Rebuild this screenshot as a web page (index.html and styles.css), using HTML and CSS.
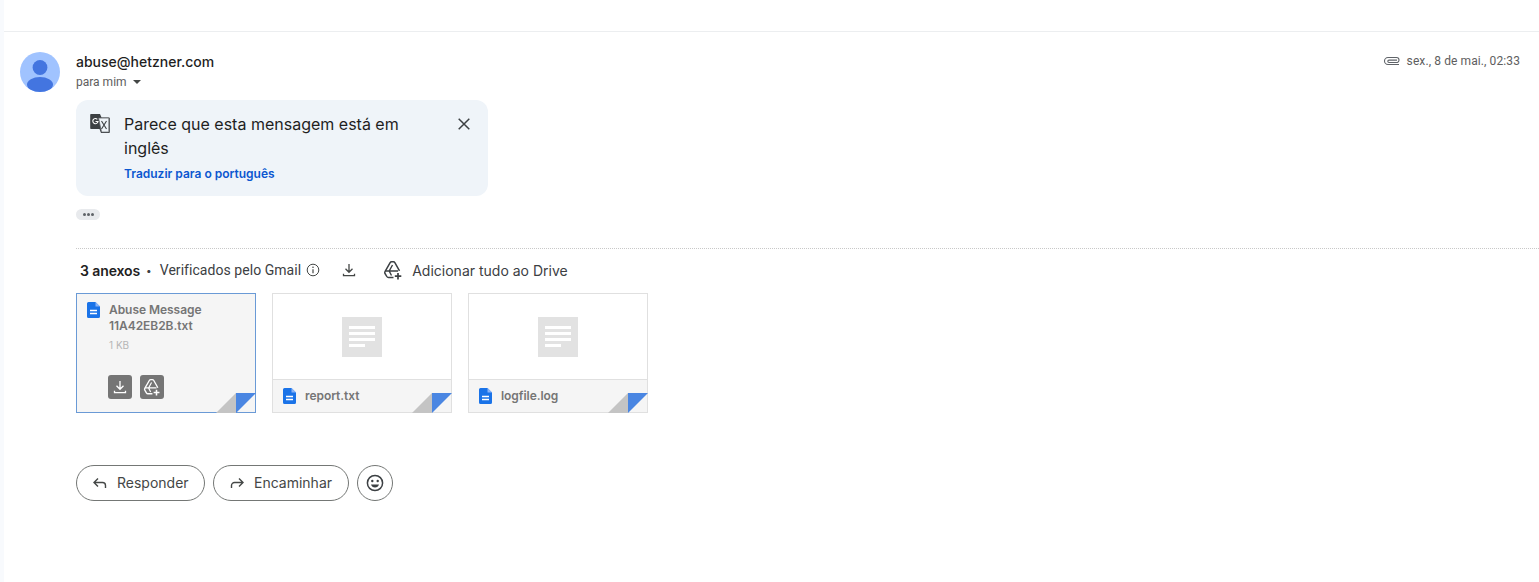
FILE: index.html
```html
<!DOCTYPE html>
<html lang="pt">
<head>
<meta charset="utf-8">
<title>abuse@hetzner.com</title>
<link rel="stylesheet" href="styles.css">
</head>
<body>
<div class="rail"></div>
<main class="main">
  <article class="message">
    <div class="avatar">
      <svg viewBox="0 0 40 40" width="40" height="40"><circle cx="20" cy="20" r="20" fill="#a0c3ff"/><circle cx="20" cy="15.500" r="7.400" fill="#4375e0"/><ellipse cx="20" cy="32.500" rx="13" ry="7.500" fill="#4375e0"/></svg>
    </div>
    <div class="content">
      <header class="head">
        <div class="who">
          <div class="sender">abuse@hetzner.com</div>
          <div class="to">para mim <span class="caret"></span></div>
        </div>
        <div class="when">
          <svg class="clip" viewBox="0 0 17 10" width="17" height="10"><path d="M16 8.500H5a3.500 3.500 0 0 1 0-7h8.500a2.500 2.500 0 0 1 0 5H6a1.200 1.200 0 0 1 0-2.400h8" fill="none" stroke="#5f6368" stroke-width="1.100"/></svg>
          <span>sex., 8 de mai., 02:33</span>
        </div>
      </header>
      <section class="banner">
        <svg class="gt" viewBox="0 0 20 20" width="20" height="20"><path d="M1 0h9l1.500 3.500H19a.8.8 0 0 1 .8.8V18.200a.8.8 0 0 1-.8.8H11l-1.500-4H1a.8.8 0 0 1-.8-.8V.8A.8.800 0 0 1 1 0z" fill="#3c4043"/><path d="M8.500 4H18.500a.4.4 0 0 1 .4.4V17.700a.4.4 0 0 1-.4.4H11.500z" fill="#eef3f8" stroke="#5f6368" stroke-width=".8"/><path d="M7.300 5.300a2.600 2.600 0 1 0 .7 2.200H5.500" fill="none" stroke="#fff" stroke-width="1.100"/><path d="M11.500 7l5 8M16.500 7l-5 8" stroke="#3c4043" stroke-width="1.100" fill="none"/></svg>
        <div class="banner-text">
          <p class="banner-msg">Parece que esta mensagem está em inglês</p>
          <a class="banner-link">Traduzir para o português</a>
        </div>
        <svg class="close" viewBox="0 0 12 12" width="12" height="12"><path d="M.7.700l10.600 10.600M11.300.7L.7 11.300" stroke="#3c4043" stroke-width="1.500"/></svg>
      </section>
      <div class="dots"><i></i><i></i><i></i></div>
      <section class="attachments">
        <div class="att-bar">
          <strong>3 anexos</strong>
          <span class="sep">•</span>
          <span class="verified">Verificados pelo Gmail</span>
          <svg class="info" viewBox="0 0 14 14" width="14" height="14"><circle cx="7" cy="7" r="5.800" fill="none" stroke="#444746" stroke-width="1"/><path d="M7 6.200v4" stroke="#444746" stroke-width="1.200"/><circle cx="7" cy="4.300" r=".8" fill="#444746"/></svg>
          <svg class="dl" viewBox="0 0 14 14" width="14" height="14"><path d="M7 1v8M3.500 5.800L7 9.300l3.500-3.500M1.500 10.800v1.900h11v-1.900" fill="none" stroke="#444746" stroke-width="1.300"/></svg>
          <svg class="drive" viewBox="0 0 20 20" width="20" height="20"><path d="M10.500 17.500H5.500a2 2 0 0 1-1.700-1L2 13.500a2 2 0 0 1 0-2L7 2.800a2 2 0 0 1 1.700-1h1.600a2 2 0 0 1 1.700 1l4.500 8" fill="none" stroke="#3c4043" stroke-width="1.500"/><path d="M2.500 11h12.500M9.500 5L6.200 11l2.300 4.500" fill="none" stroke="#3c4043" stroke-width="1.400"/><path d="M15 13v6.500M11.800 16.200h6.500" stroke="#3c4043" stroke-width="1.700"/></svg>
          <span class="add">Adicionar tudo ao Drive</span>
        </div>
        <div class="cards">
          <div class="card card-active">
            <div class="card-top">
              <svg class="doc" viewBox="0 0 13 16" width="13" height="16"><path d="M1.500 0H8.500L13 4.500V14.500A1.500 1.500 0 0 1 11.500 16H1.500A1.500 1.500 0 0 1 0 14.500V1.500A1.500 1.500 0 0 1 1.500 0z" fill="#1a73e8"/><path d="M8.500 0V4.500H13z" fill="#8ab4f8"/><path d="M3 8.500H10M3 11.500H10" stroke="#fff" stroke-width="1.300"/></svg>
              <div class="card-info">
                <div class="card-name">Abuse Message 11A42EB2B.txt</div>
                <div class="card-size">1 KB</div>
              </div>
            </div>
            <div class="card-actions">
              <span class="act"><svg viewBox="0 0 14 14" width="14" height="14"><path d="M7 1v8M3.500 5.800L7 9.300l3.500-3.500M1.500 10.800v1.900h11v-1.900" fill="none" stroke="#fff" stroke-width="1.300"/></svg></span>
              <span class="act"><svg viewBox="0 0 20 20" width="18" height="18"><path d="M10.500 17.500H5.500a2 2 0 0 1-1.700-1L2 13.500a2 2 0 0 1 0-2L7 2.800a2 2 0 0 1 1.700-1h1.600a2 2 0 0 1 1.700 1l4.500 8" fill="none" stroke="#fff" stroke-width="1.500"/><path d="M2.500 11h12.500M9.500 5L6.200 11l2.300 4.500" fill="none" stroke="#fff" stroke-width="1.300"/><path d="M15 13v6.500M11.800 16.200h6.500" stroke="#fff" stroke-width="1.700"/></svg></span>
            </div>
            <span class="fold"></span>
          </div>
          <div class="card">
            <div class="thumb"><span class="page"><i></i><i></i><i></i><i></i></span></div>
            <div class="foot">
              <svg class="doc" viewBox="0 0 13 16" width="13" height="16"><path d="M1.500 0H8.500L13 4.500V14.500A1.500 1.500 0 0 1 11.500 16H1.500A1.500 1.500 0 0 1 0 14.500V1.500A1.500 1.500 0 0 1 1.500 0z" fill="#1a73e8"/><path d="M8.500 0V4.500H13z" fill="#8ab4f8"/><path d="M3 8.500H10M3 11.500H10" stroke="#fff" stroke-width="1.300"/></svg>
              <span class="card-name">report.txt</span>
            </div>
            <span class="fold"></span>
          </div>
          <div class="card">
            <div class="thumb"><span class="page"><i></i><i></i><i></i><i></i></span></div>
            <div class="foot">
              <svg class="doc" viewBox="0 0 13 16" width="13" height="16"><path d="M1.500 0H8.500L13 4.500V14.500A1.500 1.500 0 0 1 11.500 16H1.500A1.500 1.500 0 0 1 0 14.500V1.500A1.500 1.500 0 0 1 1.500 0z" fill="#1a73e8"/><path d="M8.500 0V4.500H13z" fill="#8ab4f8"/><path d="M3 8.500H10M3 11.500H10" stroke="#fff" stroke-width="1.300"/></svg>
              <span class="card-name">logfile.log</span>
            </div>
            <span class="fold"></span>
          </div>
        </div>
      </section>
      <div class="replies">
        <button class="pill pill-reply"><svg viewBox="0 0 16 14" width="16" height="14"><path d="M6 2.500L2 6.500l4 4M2 6.500h8.500a3 3 0 0 1 3 3v2.500" fill="none" stroke="#444746" stroke-width="1.400"/></svg>Responder</button>
        <button class="pill pill-forward"><svg viewBox="0 0 16 14" width="16" height="14"><path d="M10 2.500l4 4-4 4M14 6.500H5.500a3 3 0 0 0-3 3v2.500" fill="none" stroke="#444746" stroke-width="1.400"/></svg>Encaminhar</button>
        <button class="pill pill-emoji"><svg viewBox="0 0 18 18" width="18" height="18"><circle cx="9" cy="9" r="7.600" fill="none" stroke="#3c4043" stroke-width="1.500"/><circle cx="6.300" cy="7" r="1.200" fill="#3c4043"/><circle cx="11.700" cy="7" r="1.200" fill="#3c4043"/><path d="M5 10.500h8a4.200 4.200 0 0 1-8 0z" fill="#3c4043"/></svg></button>
      </div>
    </div>
  </article>
</main>
</body>
</html>
```
FILE: styles.css
```css
* { box-sizing: border-box; }
html, body { margin: 0; height: 100%; overflow: hidden; }
body {
  display: flex;
  background: #fff;
  font-family: Inter, "Liberation Sans", sans-serif;
  color: #1f1f1f;
}
.rail { width: 4px; flex: none; background: #f8fafd; }
.main { flex: 1; min-width: 0; padding-top: 31px; }
.message {
  display: flex;
  gap: 16px;
  border-top: 1px solid #eceef0;
  padding: 20px 0 0 16px;
}
.avatar { width: 40px; height: 40px; flex: none; }
.avatar svg { display: block; }
.content { flex: 1; min-width: 0; }

.head { display: flex; justify-content: space-between; padding-right: 19px; height: 48px; }
.sender { font-size: 14px; font-weight: 500; line-height: 20px; color: #1f1f1f; }
.to { font-family: Roboto, sans-serif; font-size: 12px; line-height: 16px; color: #5e5e5e; margin-top: 2px; display: flex; align-items: center; gap: 5px; }
.caret { width: 0; height: 0; border: 4px solid transparent; border-top: 4px solid #444746; border-bottom: 0; margin-left: 1px; }
.when { display: flex; align-items: center; height: 18px; gap: 7px; font-family: Roboto, sans-serif; font-size: 12px; letter-spacing: .1px; color: #5e5e5e; }
.clip { display: block; }

.banner {
  width: 412px;
  height: 96px;
  background: #eff4f9;
  border-radius: 12px;
  display: flex;
  padding: 12px 18px 0 14px;
}
.gt { flex: none; margin-top: 2px; }
.banner-text { width: 314px; margin-left: 14px; }
.banner-msg { margin: 0; font-size: 16px; line-height: 24px; color: #1f1f1f; }
.banner-link { display: block; margin-top: 6px; font-size: 12px; line-height: 16px; font-weight: 600; color: #0b57d0; }
.close { flex: none; margin: 6px 0 0 20px; }

.dots {
  width: 24px;
  height: 11px;
  margin-top: 13px;
  border-radius: 6px;
  background: #e8eaed;
  display: flex;
  justify-content: center;
  align-items: center;
  gap: 1px;
}
.dots i { width: 3px; height: 3px; border-radius: 50%; background: #5f6368; }

.attachments { margin-top: 28px; border-top: 1px dotted #c8c8c8; }
.att-bar {
  display: flex;
  align-items: center;
  height: 44px;
  padding: 0 0 2px 4px;
  font-size: 14px;
  color: #3c4043;
}
.att-bar strong { font-weight: 600; letter-spacing: -.1px; color: #1f1f1f; }
.sep { margin: 0 8px 0 6px; font-size: 10px; }
.verified { font-family: Roboto, sans-serif; letter-spacing: .05px; }
.info { margin-left: 5px; }
.dl { margin-left: 22px; }
.drive { margin-left: 27px; }
.add { margin-left: 9px; }

.cards { display: flex; gap: 16px; }
.card {
  position: relative;
  width: 180px;
  height: 120px;
  border: 1px solid #e0e0e0;
  display: flex;
  flex-direction: column;
}
.card-active { border-color: #6a9ad6; background: #f5f5f5; padding: 8px 10px; justify-content: space-between; }
.card-top { display: flex; gap: 9px; }
.doc { flex: none; display: block; }
.card-info { width: 120px; }
.card-name { font-size: 12px; line-height: 16px; font-weight: 600; letter-spacing: -.05px; color: #757575; }
.card-size { font-size: 10px; line-height: 14px; color: #b5b5b5; margin-top: 4px; }
.card-actions { display: flex; gap: 8px; padding: 0 0 5px 21px; }
.act { width: 24px; height: 24px; border-radius: 3px; background: #757575; display: flex; align-items: center; justify-content: center; }
.thumb { height: 85px; display: flex; align-items: center; justify-content: center; }
.page {
  width: 40px;
  height: 40px;
  background: #e2e2e2;
  display: flex;
  flex-direction: column;
  gap: 3px;
  padding: 9px 7px;
}
.page i { display: block; height: 3px; background: #fff; flex: none; }
.page i:last-child { width: 16px; }
.foot {
  flex: 1;
  background: #f5f5f5;
  border-top: 1px solid #e0e0e0;
  display: flex;
  align-items: center;
  gap: 9px;
  padding-left: 10px;
}
.fold {
  position: absolute;
  right: -1px;
  bottom: -1px;
  width: 40px;
  height: 20px;
}
.fold::before, .fold::after {
  content: "";
  position: absolute;
  top: 0;
  width: 20px;
  height: 20px;
}
.fold::before { left: 0; background: #c4c4c4; clip-path: polygon(100% 0, 100% 100%, 0 100%); }
.fold::after { right: 0; background: #4a86e2; clip-path: polygon(0 0, 100% 0, 0 100%); }

.replies { display: flex; gap: 8px; margin-top: 52px; }
.pill {
  height: 36px;
  border: 1px solid #747775;
  border-radius: 18px;
  background: #fff;
  display: flex;
  align-items: center;
  font: 400 14px/20px Inter, "Liberation Sans", sans-serif;
  color: #444746;
  padding: 0;
}
.pill-reply { width: 129px; padding-left: 15px; gap: 9px; }
.pill-forward { width: 136px; padding-left: 15px; gap: 9px; }
.pill-emoji { width: 36px; justify-content: center; }
```
